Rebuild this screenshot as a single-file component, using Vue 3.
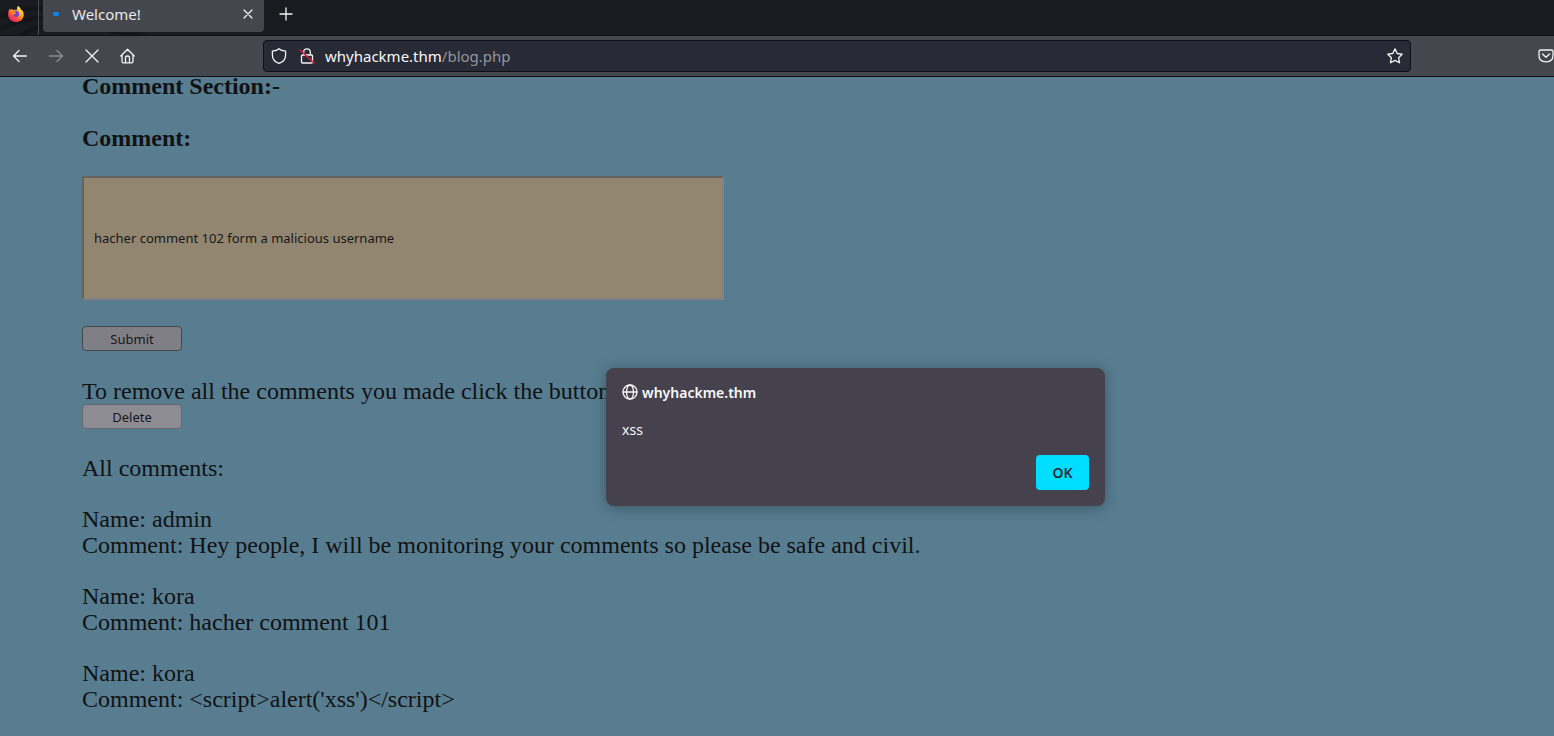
<script setup>
import { ref } from 'vue'

const comment = ref('hacher comment 102 form a malicious username')
const address = ref('whyhackme.thm/blog.php')
const comments = [
  { name: 'admin', text: 'Hey people, I will be monitoring your comments so please be safe and civil.' },
  { name: 'kora', text: 'hacher comment 101' },
  { name: 'kora', text: "<script>alert('xss')<\/script>" },
]
</script>

<template>
  <div class="browser">
    <header class="tabs">
      <svg class="waves" viewBox="0 0 180 35" aria-hidden="true">
        <path d="M0 14Q22 5 44 6V10Q20 10 0 20ZM0 27Q24 15 44 16V19Q22 22 0 31ZM18 35Q32 25 44 25V28Q34 29 27 35ZM108 32H136L148 35H120Z" />
      </svg>
      <div class="pinned">
        <svg class="fox" viewBox="0 0 16 16" aria-hidden="true">
          <defs>
            <linearGradient id="flame" x1="0.85" y1="0.1" x2="0.2" y2="0.95">
              <stop offset="0" stop-color="#fff04a" />
              <stop offset="0.4" stop-color="#ffa02a" />
              <stop offset="0.7" stop-color="#ff4a3c" />
              <stop offset="1" stop-color="#f01e78" />
            </linearGradient>
          </defs>
          <path d="M10 0C12 1 13 3 13 4L14 4C15.500 6 16 8 15.600 10C14.800 13.800 12 16 8 16C3.500 16 .3 12.800.1 8.500C0 6 .8 4 2 2.500L2.600 4L4 2.800L5 4.200C6.500 3.600 8 3.700 9 4C8.800 2.500 9 1 10 0Z" fill="url(#flame)" />
          <path d="M6 5.200C8 4.300 10 4.700 10.800 6.500C11.800 9 10.200 11 8 11C6.200 11 5.200 9.800 5.200 8.500L7 8L8 7Z" fill="#6f43d5" />
          <path d="M2.500 4.500L4.500 6L8 6.500L6.500 8.200L4 8.800Z" fill="#ff8b24" />
        </svg>
      </div>
      <div class="tab">
        <span class="loading"></span>
        <span class="tab-title">Welcome!</span>
        <button class="icon-button close" aria-label="Close tab">
          <svg viewBox="0 0 16 16"><path d="M4 4L12 12M12 4L4 12" /></svg>
        </button>
      </div>
      <button class="icon-button add" aria-label="New tab">
        <svg viewBox="0 0 16 16"><path d="M8 2V14M2 8H14" /></svg>
      </button>
    </header>

    <nav class="toolbar">
      <div class="navigation">
        <button class="icon-button" aria-label="Back">
          <svg viewBox="0 0 16 16"><path d="M14.500 8H1.500M7 2.500L1.500 8L7 13.500" /></svg>
        </button>
        <button class="icon-button" aria-label="Forward" disabled>
          <svg viewBox="0 0 16 16"><path d="M1.500 8H14.500M9 2.500L14.500 8L9 13.500" /></svg>
        </button>
        <button class="icon-button" aria-label="Stop">
          <svg viewBox="0 0 16 16"><path d="M2 2L14 14M14 2L2 14" /></svg>
        </button>
        <button class="icon-button" aria-label="Home">
          <svg viewBox="0 0 16 16"><path d="M.8 8L7.500 1.200L14.200 8M2 7V13.500Q2 14.800 3.300 14.800H11.700Q13 14.800 13 13.500V7M5.500 14.800V9.500Q5.500 8 7.500 8Q9.500 8 9.500 9.500V14.800" /></svg>
        </button>
      </div>
      <div class="urlbar">
        <svg class="icon" viewBox="0 0 16 16" aria-hidden="true"><path d="M8 .7Q10 2.500 14.600 3.200V7C14.600 11 12 14 8 15.400C4 14 1.400 11 1.400 7V3.200Q6 2.500 8 .7Z" /></svg>
        <svg class="icon lock" viewBox="0 0 16 16" aria-hidden="true">
          <path d="M4.700 7V4Q4.700 .8 8 .8Q11.300 .8 11.300 4V7M3.500 7H12.500Q13.500 7 13.500 8V14Q13.500 15 12.500 15H3.500Q2.500 15 2.500 14V8Q2.500 7 3.500 7Z" />
          <path class="slash" d="M1 2L15 15" />
        </svg>
        <label class="address">
          <span class="address-text" aria-hidden="true">whyhackme.thm<span class="path">/blog.php</span></span>
          <input v-model="address" class="address-input" aria-label="Address" />
        </label>
        <button class="icon-button" aria-label="Bookmark this page">
          <svg viewBox="0 0 16 16"><path d="M8 .9L10.200 5.500L15.200 6.200L11.600 9.700L12.500 14.800L8 12.400L3.500 14.800L4.400 9.700L.8 6.200L5.800 5.500Z" /></svg>
        </button>
      </div>
      <div class="extras">
        <button class="icon-button" aria-label="Save to Pocket">
          <svg viewBox="0 0 16 16"><path d="M2.500 2H13.500Q15 2 15 3.500V7.500Q15 13.800 8 13.800Q1 13.800 1 7.500V3.500Q1 2 2.500 2ZM4.500 6L8 9.300L11.500 6" /></svg>
        </button>
      </div>
    </nav>

    <main class="page">
      <div class="content">
        <h2>Comment Section:-</h2>
        <h2 class="field-title"><label for="comment">Comment:</label></h2>
        <input id="comment" v-model="comment" class="comment-box" type="text" />
        <button class="action submit" type="submit">Submit</button>
        <p class="remove">To remove all the comments you made click the button</p>
        <button class="action" type="button">Delete</button>
        <p class="all">All comments:</p>
        <p v-for="(item, i) in comments" :key="i" class="entry">
          Name: {{ item.name }}<br />Comment: {{ item.text }}
        </p>
      </div>
      <div class="dialog" role="alertdialog" aria-labelledby="origin" aria-describedby="message">
        <div id="origin" class="origin">
          <svg class="icon" viewBox="0 0 16 16" aria-hidden="true"><circle cx="8" cy="8" r="7" /><ellipse cx="8" cy="8" rx="3.500" ry="7" /><path d="M1 8H15" /></svg>
          <span>whyhackme.thm</span>
        </div>
        <div id="message" class="message">xss</div>
        <button class="ok">OK</button>
      </div>
    </main>
  </div>
</template>

<style>
body { margin: 0; background: #587d90; }
</style>

<style scoped>
* { box-sizing: border-box; }
.browser {
  display: flex;
  flex-direction: column;
  height: 100vh;
  overflow: hidden;
  font-family: "Noto Sans", sans-serif;
  color: #f8f8f8;
}
button, input { font-family: inherit; margin: 0; }
svg { display: block; fill: none; stroke: #f4f4f5; stroke-width: 1.3; stroke-linecap: round; stroke-linejoin: round; }
.icon, .icon-button svg { width: 16px; height: 16px; flex: none; }
.icon-button { width: 16px; height: 16px; padding: 0; border: 0; background: none; flex: none; }
.icon-button:disabled { opacity: 0.4; }

.tabs { position: relative; display: flex; flex: none; height: 36px; background: #1a1b20; border-bottom: 1px solid #101115; }
.waves { position: absolute; left: 0; top: 0; width: 180px; height: 35px; stroke: none; fill: #141519; }
.pinned { position: relative; width: 39px; padding: 6px 0 0 8px; border-right: 1px solid #4a4b50; }
.fox { width: 16px; height: 16px; stroke: none; }
.tab {
  position: relative;
  display: flex;
  align-items: center;
  width: 221px;
  height: 32px;
  margin-left: 4px;
  padding: 0 8px 4px 10px;
  border-radius: 0 0 4px 4px;
  background: #45474e;
}
.loading { width: 6px; height: 4px; border-radius: 2px; background: #0a84ff; }
.tab-title { flex: 1; margin-left: 13px; font-size: 15px; line-height: 20px; color: #e8e8ea; }
.add { margin: 6px 0 0 14px; }
.close svg { stroke-width: 1.2; }

.toolbar { display: flex; align-items: center; flex: none; height: 41px; background: #45474e; border-bottom: 1px solid #101115; }
.navigation { display: flex; gap: 20px; width: 263px; padding-left: 12px; flex: none; }
.urlbar {
  display: flex;
  align-items: center;
  flex: 1;
  height: 32px;
  padding: 0 7px;
  border: 1px solid #0e0f14;
  border-radius: 4px;
  background: #282a36;
}
.lock { margin-left: 12px; }
.slash { stroke: #e8133c; stroke-width: 1.5; }
.address { position: relative; flex: 1; margin-left: 10px; font-size: 15px; line-height: 22px; }
.address-text { display: block; }
.path { color: #94959b; }
.address-input { position: absolute; inset: 0; width: 100%; padding: 0; border: 0; background: none; font-size: 15px; color: transparent; outline: 0; }
.extras { display: flex; justify-content: flex-end; flex: none; width: 143px; }

.page { position: relative; flex: 1; min-height: 0; overflow: hidden; background: #587d90; }
.content {
  display: flex;
  flex-direction: column;
  align-items: flex-start;
  margin: -4px 82px 0;
  font-family: "Liberation Serif", serif;
  font-size: 24px;
  line-height: 26px;
  color: #101214;
}
h2, p { margin: 0; font-size: 24px; }
h2 { margin-bottom: 26px; }
.field-title { margin-bottom: 25px; }
.comment-box {
  width: 642px;
  max-width: 100%;
  height: 124px;
  padding: 0 10px;
  border: 2px solid;
  border-color: #68625f #858286 #858286 #68625f;
  background: #928670;
  font-family: "Noto Sans", sans-serif;
  font-size: 13px;
  color: #17171a;
}
.action {
  width: 100px;
  height: 25px;
  padding: 0;
  border: 1px solid #66666e;
  border-radius: 4px;
  background: #8d8c92;
  font-family: "Noto Sans", sans-serif;
  font-size: 13px;
  color: #17171a;
}
.submit { margin-top: 26px; background: #807f86; border-color: #46464e; }
.remove { margin-top: 27px; }
.all { margin-top: 26px; }
.entry { margin-top: 25px; }

.dialog {
  position: absolute;
  left: 39%;
  top: 291px;
  display: flex;
  flex-direction: column;
  width: 499px;
  height: 138px;
  padding: 16px;
  border-radius: 8px;
  background: #45424e;
  box-shadow: 0 2px 14px rgba(20, 30, 40, 0.4);
}
.origin { display: flex; align-items: center; gap: 4px; height: 16px; font-size: 14px; font-weight: 600; }
.message { margin-top: 20px; font-size: 14px; line-height: 20px; }
.ok {
  align-self: flex-end;
  width: 53px;
  height: 35px;
  margin-top: 15px;
  padding: 0;
  border: 0;
  border-radius: 4px;
  background: #00ddff;
  font-size: 14px;
  font-weight: 600;
  color: #2b2a33;
}
</style>
